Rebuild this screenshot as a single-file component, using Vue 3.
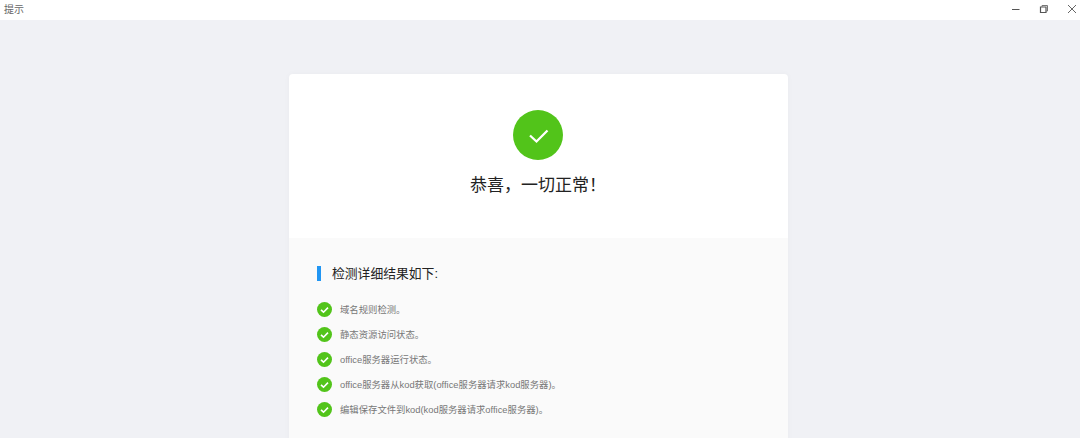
<script setup>
const items = [
  '域名规则检测。',
  '静态资源访问状态。',
  'office服务器运行状态。',
  'office服务器从kod获取(office服务器请求kod服务器)。',
  '编辑保存文件到kod(kod服务器请求office服务器)。',
]
</script>

<template>
  <div class="window">
    <header class="titlebar">
      <span class="title">提示</span>
      <div class="controls">
        <svg width="10" height="10" viewBox="0 0 10 10"><path d="M1 5.5h7.5" stroke="#555" stroke-width="1" fill="none"/></svg>
        <svg width="10" height="10" viewBox="0 0 10 10"><path d="M1.5 3h5.5v5.5h-5.5z" stroke="#555" stroke-width="1.2" fill="none"/><path d="M3 3V1.5h5.5V7H7" stroke="#777" stroke-width="1" fill="none"/></svg>
        <svg width="10" height="10" viewBox="0 0 10 10"><path d="M1 1l8 8M9 1l-8 8" stroke="#666" stroke-width="1" fill="none"/></svg>
      </div>
    </header>
    <main class="page">
      <section class="card">
        <div class="hero">
          <svg class="hero-icon" width="50" height="50" viewBox="0 0 50 50">
            <circle cx="25" cy="25" r="25" fill="#52c41a"/>
            <path d="M17 25.5l6.5 6 11-11" fill="none" stroke="#fff" stroke-width="2.3"/>
          </svg>
          <h1 class="hero-title">恭喜，一切正常！</h1>
        </div>
        <div class="details">
          <h2 class="details-title">检测详细结果如下:</h2>
          <ul class="list">
            <li v-for="item in items" :key="item" class="row">
              <svg width="15" height="15" viewBox="0 0 15 15">
                <circle cx="7.5" cy="7.5" r="7.5" fill="#52c41a"/>
                <path d="M4 7.8l2.5 2.4 4.5-4.6" fill="none" stroke="#fff" stroke-width="1.6"/>
              </svg>
              <span class="row-text">{{ item }}</span>
            </li>
          </ul>
        </div>
      </section>
    </main>
  </div>
</template>

<style>
html, body { margin: 0; height: 100%; overflow: hidden; background: #f0f1f5; }
</style>

<style scoped>
.window {
  width: 1080px;
  height: 438px;
  overflow: hidden;
  display: flex;
  flex-direction: column;
  font-family: "Liberation Sans", "Noto Sans CJK SC", sans-serif;
}
.titlebar {
  height: 20px;
  flex: none;
  background: #fff;
  display: flex;
  align-items: center;
  justify-content: space-between;
  padding: 0 3px 3px 4px;
  box-sizing: border-box;
}
.title { font-size: 10px; color: #666; }
.controls { display: flex; gap: 18px; align-items: center; }
.page {
  flex: 1;
  min-height: 0;
  background: #f0f1f5;
  display: flex;
  padding: 54px 0 0 289px;
  box-sizing: border-box;
}
.card {
  width: 499px;
  flex: none;
  align-self: flex-start;
  background: #fff;
  border-radius: 4px;
  overflow: hidden;
  box-shadow: 0 0 6px rgba(0, 0, 0, 0.03);
}
.hero {
  height: 164px;
  box-sizing: border-box;
  padding: 36px 1px 0 0;
  display: flex;
  flex-direction: column;
  align-items: center;
}
.hero-icon { display: block; }
.hero-title {
  margin: 14px 0 0;
  font-size: 17px;
  line-height: 24px;
  font-weight: 400;
  color: #222;
}
.details {
  background: #fafafa;
  padding: 28px 28px 40px;
}
.details-title {
  margin: 0;
  padding-left: 11px;
  border-left: 4px solid #2196f3;
  font-size: 12.8px;
  line-height: 15px;
  font-weight: 400;
  color: #222;
}
.list {
  list-style: none;
  margin: 21px 0 0;
  padding: 0;
  display: flex;
  flex-direction: column;
  gap: 10px;
}
.row {
  display: flex;
  align-items: center;
  gap: 8px;
  height: 15px;
  font-size: 9.35px;
  color: #777;
}
.row svg { flex: none; }
.row-text { margin-bottom: 2px; }
</style>
